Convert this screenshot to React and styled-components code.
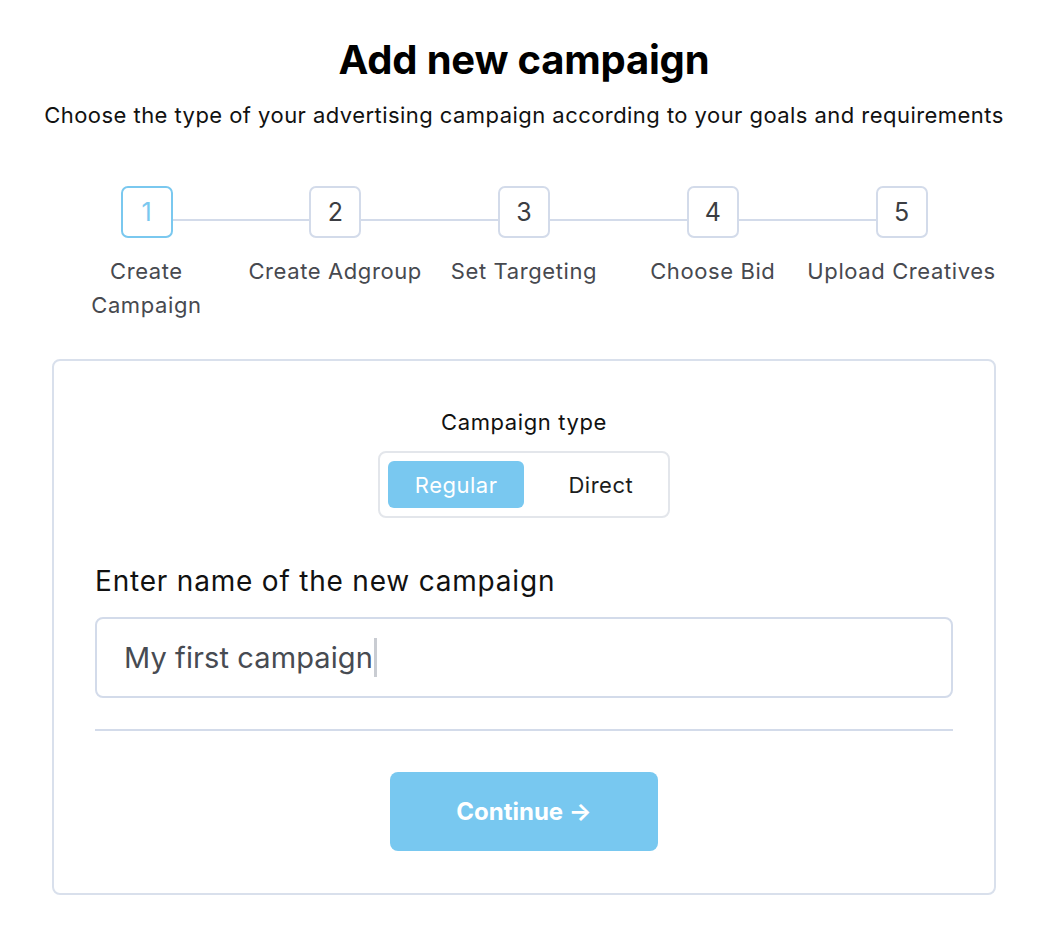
import React from "react";
import styled, { createGlobalStyle } from "styled-components";

const steps = [
  { n: 1, label: "Create Campaign", narrow: true },
  { n: 2, label: "Create Adgroup" },
  { n: 3, label: "Set Targeting" },
  { n: 4, label: "Choose Bid" },
  { n: 5, label: "Upload Creatives" },
];

const App = () => {
  const current = 1;
  return (
    <Page>
      <GlobalStyle />
      <Title>Add new campaign</Title>
      <Subtitle>
        Choose the type of your advertising campaign according to your goals
        and requirements
      </Subtitle>

      <Track>
        {steps.map((s, i) => (
          <React.Fragment key={s.n}>
            {i > 0 && <Line />}
            <StepBox active={s.n === current}>{s.n}</StepBox>
          </React.Fragment>
        ))}
      </Track>
      <Labels>
        {steps.map((s) => (
          <StepLabel key={s.n} narrow={s.narrow}>
            {s.label}
          </StepLabel>
        ))}
      </Labels>

      <Card>
        <TypeLabel>Campaign type</TypeLabel>
        <Segment>
          <SegButton active>Regular</SegButton>
          <SegButton>Direct</SegButton>
        </Segment>

        <FieldLabel>Enter name of the new campaign</FieldLabel>
        <Field role="textbox">
          My first campaign
          <Caret />
        </Field>

        <Divider />

        <Footer>
          <Continue>Continue →</Continue>
        </Footer>
      </Card>
    </Page>
  );
};

export default App;

const GlobalStyle = createGlobalStyle`
  body {
    margin: 0;
    background: #fff;
    font-family: "Inter", "Open Sans", sans-serif;
    color: #111;
  }
`;

const Page = styled.div`
  width: 944px;
  margin: 0 0 0 52px;
  padding-top: 34px;
  display: flex;
  flex-direction: column;
  align-items: center;
`;

const Title = styled.h1`
  margin: 0;
  font-size: 40px;
  font-weight: 700;
  line-height: 52px;
  letter-spacing: -0.2px;
  color: #000;
`;

const Subtitle = styled.p`
  margin: 14px 0 0;
  font-size: 22px;
  line-height: 30px;
  letter-spacing: 0.45px;
  white-space: nowrap;
  color: #111;
`;

const Track = styled.div`
  margin-top: 56px;
  width: 807px;
  display: flex;
  align-items: flex-start;
`;

const Line = styled.div`
  flex: 1;
  height: 2px;
  margin-top: 33px;
  background: #d3dbea;
`;

const StepBox = styled.div`
  width: 52px;
  height: 52px;
  box-sizing: border-box;
  border: 2px solid ${(p) => (p.active ? "#7ac8ef" : "#d3dbea")};
  border-radius: 7px;
  display: flex;
  align-items: center;
  justify-content: center;
  font-size: 25px;
  color: ${(p) => (p.active ? "#7ac8ef" : "#3b3d42")};
`;

const Labels = styled.div`
  margin-top: 16px;
  width: 944px;
  display: flex;
`;

const StepLabel = styled.div`
  width: 188.8px;
  display: flex;
  justify-content: center;
  text-align: center;
  font-size: 22px;
  line-height: 34px;
  letter-spacing: 0.6px;
  color: #47494f;
  white-space: ${(p) => (p.narrow ? "normal" : "nowrap")};
  padding: ${(p) => (p.narrow ? "0 24px" : "0")};
  box-sizing: border-box;
`;

const Card = styled.div`
  margin-top: 37px;
  width: 944px;
  box-sizing: border-box;
  border: 2px solid #d9e0ec;
  border-radius: 8px;
  padding: 46px 41px 42px;
  display: flex;
  flex-direction: column;
`;

const TypeLabel = styled.div`
  align-self: center;
  font-size: 22px;
  line-height: 30px;
  letter-spacing: 0.6px;
  color: #111;
`;

const Segment = styled.div`
  align-self: center;
  margin-top: 14px;
  padding: 8px;
  border: 2px solid #e3e6eb;
  border-radius: 8px;
  display: flex;
  gap: 17px;
`;

const SegButton = styled.button`
  height: 47px;
  padding: 0 27px;
  border: none;
  border-radius: 6px;
  font-family: inherit;
  font-size: 22px;
  letter-spacing: 0.5px;
  background: ${(p) => (p.active ? "#79c8f0" : "transparent")};
  color: ${(p) => (p.active ? "#fff" : "#1c1d20")};
`;

const FieldLabel = styled.div`
  margin-top: 44px;
  font-size: 28px;
  line-height: 38px;
  letter-spacing: 0.8px;
  color: #111;
`;

const Field = styled.div`
  margin-top: 17px;
  height: 81px;
  box-sizing: border-box;
  border: 2px solid #d3dbea;
  border-radius: 8px;
  padding: 0 27px;
  display: flex;
  align-items: center;
  font-size: 29px;
  letter-spacing: 0.1px;
  color: #474b52;
`;

const Caret = styled.span`
  display: inline-block;
  width: 3px;
  height: 39px;
  margin-left: 1px;
  background: #c9ccd2;
`;

const Divider = styled.hr`
  margin: 31px 0 0;
  border: none;
  height: 2px;
  background: #d3dbea;
`;

const Footer = styled.div`
  margin-top: 41px;
  display: flex;
  justify-content: center;
`;

const Continue = styled.button`
  width: 268px;
  height: 79px;
  border: none;
  border-radius: 8px;
  background: #78c8f0;
  color: #fff;
  font-family: inherit;
  font-size: 24px;
  font-weight: 700;
  cursor: pointer;
`;
